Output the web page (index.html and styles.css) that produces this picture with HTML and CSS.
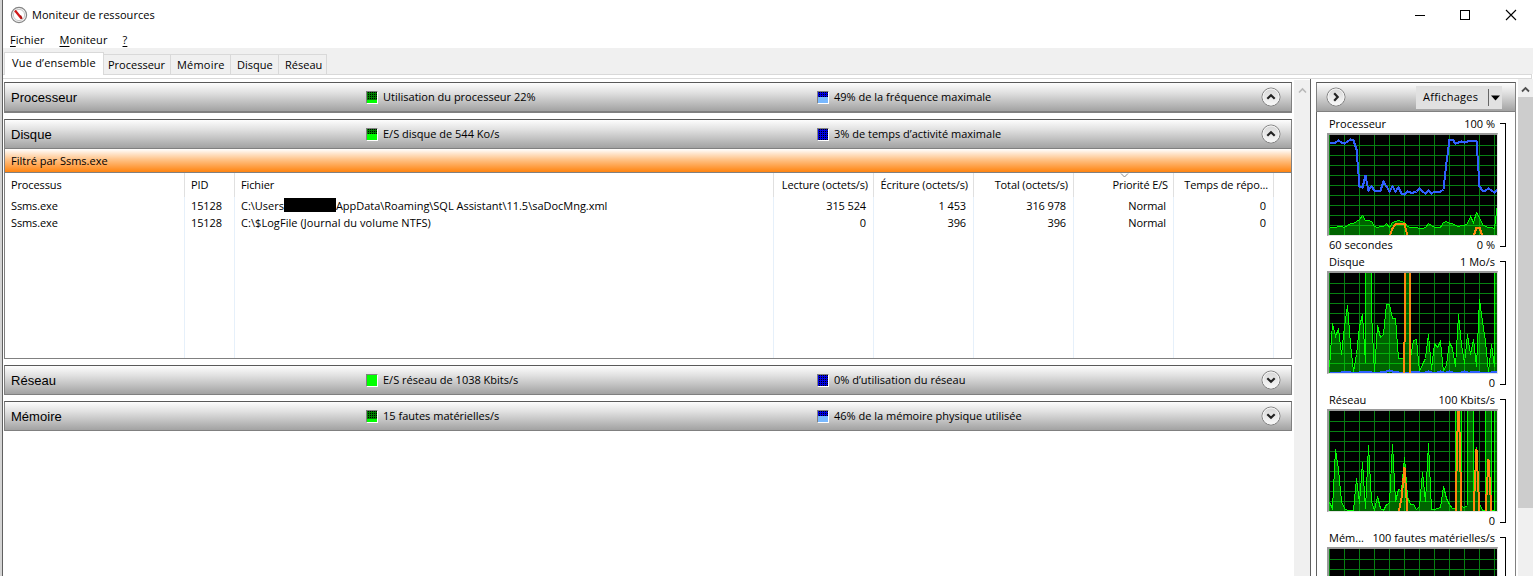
FILE: index.html
```html
<!DOCTYPE html>
<html lang="fr">

<head>
    <meta charset="UTF-8">
    <title>Moniteur de ressources</title>
    <link rel="stylesheet" href="styles.css">
</head>

<body>
    <div class="window">
        <div class="titlebar">
            <svg class="app-icon" width="18" height="18" viewBox="0 0 18 18">
                <circle cx="9" cy="9" r="7.6" fill="#f4f4f4" stroke="#858585" stroke-width="1.2" />
                <circle cx="9" cy="9" r="5.6" fill="#fff" stroke="#bbb" stroke-width="0.8" />
                <path d="M5 4.5L11.5 12.5" stroke="#d01818" stroke-width="2.2" />
                <path d="M10.5 9.5L12 13" stroke="#a01010" stroke-width="1.2" />
            </svg>
            <span class="title">Moniteur de ressources</span>
            <svg class="window-buttons" width="110" height="28" viewBox="0 0 110 28" fill="none" stroke="#000">
                <path d="M0 14.5H10" />
                <rect x="45.5" y="9.5" width="9" height="9" />
                <path d="M91 9L101 19M101 9L91 19" stroke-width="1.1" />
            </svg>
        </div>
        <div class="menu">
            <span><u>F</u>ichier</span>
            <span><u>M</u>oniteur</span>
            <span><u>?</u></span>
        </div>
        <div class="tabs">
            <div class="tab active">Vue d’ensemble</div>
            <div class="tab tab-cpu">Processeur</div>
            <div class="tab tab-mem">Mémoire</div>
            <div class="tab tab-disk">Disque</div>
            <div class="tab tab-net">Réseau</div>
        </div>
        <div class="tab-pane"></div>

        <div class="content">
            <div class="main">
                <div class="bar bar-cpu">
                    <span class="bar-title">Processeur</span>
                    <span class="stat"><i class="meter green"><b style="height: 27%"></b></i>Utilisation du processeur 22%</span>
                    <span class="stat"><i class="meter blue"><b style="height: 50%"></b></i>49% de la fréquence maximale</span>
                    <svg class="round" width="20" height="20" viewBox="0 0 20 20"><use href="#disc" /><path d="M6.3 11.8L10 8.3L13.7 11.8" /></svg>
                </div>

                <div class="bar bar-disk">
                    <span class="bar-title">Disque</span>
                    <span class="stat"><i class="meter green"><b style="height: 54%"></b></i>E/S disque de 544 Ko/s</span>
                    <span class="stat"><i class="meter blue"></i>3% de temps d’activité maximale</span>
                    <svg class="round" width="20" height="20" viewBox="0 0 20 20"><use href="#disc" /><path d="M6.3 11.8L10 8.3L13.7 11.8" /></svg>
                </div>
                <div class="filter">Filtré par Ssms.exe</div>
                <div class="table">
                    <div class="col">
                        <div class="head">Processus</div>
                        <div class="cell">Ssms.exe</div>
                        <div class="cell">Ssms.exe</div>
                    </div>
                    <div class="col">
                        <div class="head">PID</div>
                        <div class="cell">15128</div>
                        <div class="cell">15128</div>
                    </div>
                    <div class="col">
                        <div class="head">Fichier</div>
                        <div class="cell path">C:\Users<i class="masked"></i>AppData\Roaming\SQL Assistant\11.5\saDocMng.xml</div>
                        <div class="cell log">C:\$LogFile (Journal du volume NTFS)</div>
                    </div>
                    <div class="col num">
                        <div class="head">Lecture (octets/s)</div>
                        <div class="cell">315 524</div>
                        <div class="cell">0</div>
                    </div>
                    <div class="col num">
                        <div class="head">Écriture (octets/s)</div>
                        <div class="cell">1 453</div>
                        <div class="cell">396</div>
                    </div>
                    <div class="col num">
                        <div class="head">Total (octets/s)</div>
                        <div class="cell">316 978</div>
                        <div class="cell">396</div>
                    </div>
                    <div class="col num">
                        <div class="head">Priorité E/S
                            <svg class="sort" width="9" height="5" viewBox="0 0 9 5"><path d="M1 0.5L4.5 4L8 0.5" fill="none" stroke="#888" /></svg>
                        </div>
                        <div class="cell">Normal</div>
                        <div class="cell">Normal</div>
                    </div>
                    <div class="col num">
                        <div class="head">Temps de répo...</div>
                        <div class="cell">0</div>
                        <div class="cell">0</div>
                    </div>
                </div>

                <div class="bar bar-net">
                    <span class="bar-title">Réseau</span>
                    <span class="stat"><i class="meter green"><b style="height: 100%"></b></i>E/S réseau de 1038 Kbits/s</span>
                    <span class="stat"><i class="meter blue"></i>0% d’utilisation du réseau</span>
                    <svg class="round" width="20" height="20" viewBox="0 0 20 20"><use href="#disc" /><path d="M6.3 8.3L10 11.8L13.7 8.3" /></svg>
                </div>
                <div class="bar bar-mem">
                    <span class="bar-title">Mémoire</span>
                    <span class="stat"><i class="meter green"><b style="height: 27%"></b></i>15 fautes matérielles/s</span>
                    <span class="stat"><i class="meter blue"><b style="height: 50%"></b></i>46% de la mémoire physique utilisée</span>
                    <svg class="round" width="20" height="20" viewBox="0 0 20 20"><use href="#disc" /><path d="M6.3 8.3L10 11.8L13.7 8.3" /></svg>
                </div>
            </div>

            <div class="scroll disabled">
                <svg width="9" height="7" viewBox="0 0 9 7"><path d="M1 5.5L4.5 2L8 5.5" fill="none" stroke="#b8b8b8" stroke-width="1.6" /></svg>
            </div>

            <div class="side">
                <div class="side-head">
                    <svg class="round" width="20" height="20" viewBox="0 0 20 20"><use href="#disc" /><path d="M8.2 6.3L11.7 10L8.2 13.7" /></svg>
                    <div class="views">
                        <span>Affichages</span>
                        <svg width="13" height="23" viewBox="0 0 13 23"><path d="M0.5 3V20" stroke="#666" /><path d="M3 9.5H12L7.5 14.5Z" fill="#000" /></svg>
                    </div>
                </div>
                <div class="graph">
                    <div class="graph-body">
                        <div class="label"><span>Processeur</span><span>100 %</span></div>
                        <svg class="chart" id="cpu" width="168" height="100"></svg>
                        <div class="label foot"><span>60 secondes</span><span>0 %</span></div>
                    </div>
                    <div class="bracket"></div>
                </div>
                <div class="graph">
                    <div class="graph-body">
                        <div class="label"><span>Disque</span><span>1 Mo/s</span></div>
                        <svg class="chart" id="disk" width="168" height="100"></svg>
                        <div class="label foot"><span></span><span>0</span></div>
                    </div>
                    <div class="bracket"></div>
                </div>
                <div class="graph">
                    <div class="graph-body">
                        <div class="label"><span>Réseau</span><span>100 Kbits/s</span></div>
                        <svg class="chart" id="net" width="168" height="100"></svg>
                        <div class="label foot"><span></span><span>0</span></div>
                    </div>
                    <div class="bracket"></div>
                </div>
                <div class="graph">
                    <div class="graph-body">
                        <div class="label"><span>Mém...</span><span>100 fautes matérielles/s</span></div>
                        <svg class="chart" id="mem" width="168" height="100"></svg>
                    </div>
                    <div class="bracket"></div>
                </div>
            </div>

            <div class="scroll side-scroll">
                <svg width="9" height="7" viewBox="0 0 9 7"><path d="M1 5.5L4.5 2L8 5.5" fill="none" stroke="#505050" stroke-width="1.8" /></svg>
                <div class="thumb"></div>
            </div>
        </div>
    </div>

    <svg class="defs" width="0" height="0">
        <defs>
            <linearGradient id="discFill" x1="0" y1="0" x2="0" y2="1">
                <stop offset="0" stop-color="#d6d6d6" />
                <stop offset="1" stop-color="#fafafa" />
            </linearGradient>
            <g id="disc">
                <circle cx="10" cy="10" r="9" fill="url(#discFill)" stroke="#828282" stroke-width="1" />
                <circle cx="10" cy="10" r="8" fill="none" stroke="#f4f4f4" stroke-width="1" />
            </g>
        </defs>
    </svg>

    <script src="charts.js"></script>
</body>

</html>
```

FILE: styles.css
```css
body {
    margin: 0;
    font-family: "Open Sans", "Noto Sans", sans-serif;
    font-size: 11px;
    line-height: 16px;
    color: #000;
    background: #fff;
    overflow: hidden;
}

.window {
    display: flex;
    flex-direction: column;
    box-sizing: border-box;
    width: 1533px;
    height: 576px;
    padding-left: 1px;
    border-left: 2px solid #d4d4d4;
    box-shadow: inset 1px 0 #606060;
    white-space: nowrap;
    overflow: hidden;
}

.defs {
    position: absolute;
}

.titlebar {
    display: flex;
    align-items: center;
    height: 29px;
    padding-left: 7px;
}

.title {
    margin-left: 4px;
    letter-spacing: 0.05px;
}

.window-buttons {
    margin-left: auto;
    margin-right: 8px;
}

.menu {
    display: flex;
    gap: 15px;
    height: 16px;
    padding: 3px 0 0 7px;
    letter-spacing: 0.08px;
}

.menu u {
    text-underline-offset: 2px;
}

.tabs {
    display: flex;
    align-items: flex-end;
    height: 26px;
    padding-left: 1px;
    background: #f0f0f0;
}

.tab {
    box-sizing: border-box;
    height: 20px;
    padding: 2px 0 0 6px;
    border: 1px solid #d9d9d9;
    border-width: 1px 1px 0 0;
}

.tab.active {
    position: relative;
    width: 100px;
    height: 23px;
    padding: 2px 0 0 7px;
    margin-bottom: -1px;
    background: #fff;
    border-left-width: 1px;
    letter-spacing: 0.2px;
}

.tab-cpu {
    width: 67px;
    padding-left: 4px;
}

.tab-mem {
    width: 60px;
    letter-spacing: 0.2px;
}

.tab-disk {
    width: 48px;
}

.tab-net {
    width: 48px;
}

.tab-pane {
    box-sizing: border-box;
    height: 5px;
    margin: 0 1px 0 0;
    border: 1px solid #d9d9d9;
    border-left: 0;
}

.content {
    display: flex;
    flex: 1;
    min-height: 0;
    overflow: hidden;
}

.main {
    width: 1288px;
    padding: 3px 0 0 1px;
}

.bar {
    display: grid;
    grid-template-columns: 355px 451px 1fr 20px;
    align-items: center;
    box-sizing: border-box;
    height: 30px;
    padding: 0 10px 0 6px;
    border: 1px solid #808080;
    border-top-color: #595959;
    background: linear-gradient(#fdfdfd, #e0e0e0 35%, #a2a2a2);
}

.bar-cpu {
    height: 31px;
    margin-bottom: 6px;
    border-bottom-width: 2px;
}

.bar-net {
    margin: 6px 0;
}

.bar-title {
    padding-top: 2px;
    font-family: "Liberation Sans", Arial, sans-serif;
    font-size: 13px;
    letter-spacing: 0.03px;
}

.stat {
    display: flex;
    align-items: center;
}

.meter {
    display: flex;
    align-items: flex-end;
    width: 10px;
    height: 11px;
    margin-right: 5px;
    border: 1px solid #fff;
    border-top-color: #808080;
    border-left-color: #808080;
}

.meter b {
    width: 100%;
}

.green {
    background: conic-gradient(#000 25%, #008000 0) 0 0 / 2px 2px;
}

.green b {
    background: #0f0;
}

.blue {
    background: conic-gradient(#000 25%, #0000e6 0) 0 0 / 2px 2px;
}

.blue b {
    background: #78b8ff;
}

.round {
    margin-bottom: 1px;
    fill: none;
    stroke: #222;
    stroke-width: 2.2;
}

.filter {
    height: 23px;
    padding-left: 6px;
    line-height: 24px;
    border: 1px solid #808080;
    border-top: 0;
    background: linear-gradient(#fff, #ffc48a 45%, #ff8410);
}

.table {
    display: grid;
    grid-template-columns: 180px 50px 539px repeat(5, 100px);
    height: 185px;
    border: 1px solid #808080;
    border-top: 0;
    letter-spacing: -0.12px;
}

.col {
    border-right: 1px solid #e6f0fa;
}

.head {
    position: relative;
    height: 20px;
    padding: 4px 5px 0 6px;
    margin-right: -1px;
    border-right: 1px solid #e0e0e0;
}

.cell {
    height: 17px;
    line-height: 18px;
    padding: 0 7px 0 6px;
}

.num {
    text-align: right;
}

.sort {
    position: absolute;
    left: 46px;
    top: 0;
}

.path {
    display: flex;
    letter-spacing: -0.02px;
}

.log {
    letter-spacing: 0.06px;
}

.masked {
    width: 52px;
    height: 14px;
    margin-top: 1px;
    background: #000;
}

.scroll {
    display: flex;
    flex-direction: column;
    align-items: center;
    background: #f0f0f0;
}

.disabled {
    width: 16px;
    margin: 1px 0 0 2px;
}

.scroll svg {
    margin-top: 7px;
}

.side {
    width: 200px;
    padding: 3px 0 0 5px;
    border-left: 1px solid #606060;
}

.side-head {
    display: flex;
    align-items: center;
    justify-content: space-between;
    box-sizing: border-box;
    height: 30px;
    padding: 0 13px 0 9px;
    border: 1px solid #808080;
    border-top-color: #595959;
    background: linear-gradient(#fdfdfd, #e0e0e0 35%, #a2a2a2);
}

.views {
    display: flex;
    align-items: center;
    justify-content: space-between;
    width: 78px;
    height: 23px;
    padding: 0 1px 0 7px;
    background: #e1e1e1;
    letter-spacing: 0.25px;
}

.views svg {
    margin: 0;
}

.graph {
    display: flex;
    box-sizing: border-box;
    height: 138px;
    padding: 4px 0 0 10px;
    border-left: 1px solid #606060;
    border-right: 1px solid #808080;
}

.graph-body {
    width: 171px;
}

.label {
    display: flex;
    justify-content: space-between;
    height: 17px;
    padding: 0 3px 0 2px;
}

.foot {
    padding-top: 1px;
}

.chart {
    display: block;
    background: #000;
    border: 2px solid #9a9a9a;
    border-right: 1px solid #e3e3e3;
    border-bottom: 1px solid #e3e3e3;
    fill: none;
    shape-rendering: crispEdges;
}

.grid {
    stroke: #078012;
}

.area {
    fill: rgba(0, 255, 0, 0.39);
    stroke: none;
}

.line-green {
    stroke: #0f0;
}

.line-blue {
    stroke: #3060ff;
    stroke-width: 2;
}

.line-orange {
    stroke: #ff8810;
    stroke-width: 2;
}

.bracket {
    width: 5px;
    height: 122px;
    margin: 7px 0 0 2px;
    border: 1px solid #000;
    border-left: 0;
}

.side-scroll {
    width: 15px;
    margin-left: 2px;
}

.thumb {
    width: 15px;
    height: 411px;
    margin-top: 4px;
    background: #cdcdcd;
}
```

FILE: charts.js
```js
// one sample every 3 pixels, values in % of the chart height
const OVER = 5000;

const charts = {
    cpu: {
        green: [7, 7, 7, 8, 8, 7, 9, 11, 11, 13, 15, 19, 14, 14, 13, 8, 7, 8, 8, 11, 7, 12, 13, 14, 13, 12, 8, 7, 7, 7, 6, 6, 7, 11, 9, 7, 7, 7, 12, 13, 11, 11, 9, 8, 9, 9, 11, 18, 12, 22, 17, 10, 8, 7, 7, 6, 30],
        blue: [92, 92, 92, 94, 92, 91, 93, 95, 94, 85, 48, 47, 59, 44, 48, 44, 44, 44, 53, 48, 43, 48, 43, 47, 41, 40, 43, 42, 42, 43, 46, 43, 41, 44, 41, 43, 43, 43, 45, 72, 95, 95, 91, 92, 93, 92, 93, 94, 94, 94, 48, 44, 44, 46, 44, 42, 45],
        orange: [
            [[20, -2], [21, 6], [22, 10], [23, 11], [25, 11], [26, -2]],
            [[48, -2], [49, 7], [50, 7], [51, -2]]
        ]
    },
    disk: {
        green: [5, 49, 36, 44, 18, 46, 67, 28, 1, 18, 46, 58, 10, OVER, 60, 0, 47, 35, 38, 68, 68, 54, 54, 14, 14, 15, OVER, 15, 32, 33, 1, 8, 14, 38, 3, 29, 25, 31, 1, 8, 30, 24, 6, 58, 28, 9, 38, 18, 33, 6, 73, 51, 31, 1, 28, 6, OVER],
        blue: [0, 0, 0, 0, 0, 1, 1, 0, 0, 0, 0, 1, 1, 1, 0, 0, 0, 0, 1, 1, 2, 1, 1, 0, 0, 0, 0, 0, 1, 1, 0, 0, 0, 1, 0, 0, 0, 1, 0, 0, 1, 0, 0, 0, 0, 1, 0, 0, 1, 1, 0, 0, 0, 0, 0, 1, 1],
        orange: [
            [[25, -2], [26, OVER], [27, -2]]
        ]
    },
    net: {
        green: [8, 2, 61, 41, 9, 2, 0, 0, 0, 32, 7, 48, 2, 65, 9, 0, 14, 2, 0, 6, 7, 66, 9, 21, 20, 53, 14, 6, 6, 1, 4, 38, 9, 67, 1, 1, 2, 3, 24, 12, 6, 2, 2, OVER, 4, 3, 5, OVER, 5, 63, 7, 0, 0, OVER, 0, 0, OVER],
        orange: [
            [[23, -2], [24, 12], [25, 43], [26, -2]],
            [[42, -2], [43, 120], [44, -2]],
            [[48, -2], [49, 61], [50, -2]],
            [[52, -2], [53, 51], [54, -2]]
        ]
    },
    mem: {}
};

function toPath(points) {
    return points.map(([x, y], i) => (i ? "L" : "M") + (x * 3 + 0.5) + " " + (99.5 - y)).join("");
}

function samplesToPath(samples) {
    return toPath(samples.map((value, i) => [i, value]));
}

for (const id in charts) {
    const data = charts[id];
    let grid = "";
    for (let x = 0; x < 168; x += 15) grid += `M${x + 0.5} 0V100`;
    for (let y = 10; y < 100; y += 10) grid += `M0 ${y + 0.5}H168`;

    let out = `<path class="grid" d="${grid}"/>`;
    if (data.green) {
        const line = samplesToPath(data.green);
        out += `<path class="area" d="${line}V100H0Z"/><path class="line-green" d="${line}"/>`;
    }
    if (data.blue) out += `<path class="line-blue" d="${samplesToPath(data.blue)}"/>`;
    if (data.orange) out += `<path class="line-orange" d="${data.orange.map(toPath).join("")}"/>`;
    document.getElementById(id).innerHTML = out;
}
```
